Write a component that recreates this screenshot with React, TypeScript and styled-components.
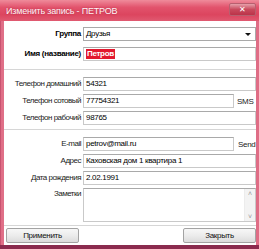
import styled, { createGlobalStyle } from 'styled-components'

const GlobalStyle = createGlobalStyle`
  html, body {
    margin: 0;
    padding: 0;
    background: #ffffff;
  }
  body {
    font-family: "Liberation Sans", Arial, sans-serif;
    font-size: 8px;
    color: #000;
  }
`

export default function App() {
  return (
    <>
      <GlobalStyle />
      <Window>
        <TitleBar>
          <Title>Изменить запись - ПЕТРОВ</Title>
          <CloseButton>✕</CloseButton>
        </TitleBar>
        <Frame>
          <Body>
            <Section $gap={6}>
              <Label $bold>Группа</Label>
              <Select>
                <span>Друзья</span>
                <Arrow />
              </Select>
              <Label $bold>Имя (название)</Label>
              <Field>
                <Selected>Петров</Selected>
              </Field>
            </Section>
            <Separator $top={8} $bottom={6} />
            <Section $gap={3}>
              <Label>Телефон домашний</Label>
              <Field>54321</Field>
              <Label>Телефон сотовый</Label>
              <Inline>
                <Field>77754321</Field>
                <Suffix>SMS</Suffix>
              </Inline>
              <Label>Телефон рабочий</Label>
              <Field>98765</Field>
            </Section>
            <Separator $top={4} $bottom={6} />
            <Section $gap={3}>
              <Label>E-mail</Label>
              <Inline>
                <Field>petrov@mail.ru</Field>
                <Suffix $pad={4}>Send</Suffix>
              </Inline>
              <Label>Адрес</Label>
              <Field>Каховская дом 1 квартира 1</Field>
              <Label>Дата рождения</Label>
              <Field>2.02.1991</Field>
              <Label $top>Заметки</Label>
              <Notes>
                <Scrollbar>
                  <ScrollArrow>˄</ScrollArrow>
                  <ScrollArrow>˅</ScrollArrow>
                </Scrollbar>
              </Notes>
            </Section>
            <Separator $top={3} $bottom={1} />
            <ButtonRow>
              <Button>Применить</Button>
              <Button>Закрыть</Button>
            </ButtonRow>
          </Body>
        </Frame>
      </Window>
    </>
  )
}

const Window = styled.div`
  width: 259px;
  height: 249px;
  display: flex;
  flex-direction: column;
  background: #d9607b;
  overflow: hidden;
`

const TitleBar = styled.div`
  height: 21px;
  flex: none;
  display: flex;
  align-items: flex-start;
  justify-content: space-between;
  padding: 0 3px 0 6px;
  box-sizing: border-box;
  background: linear-gradient(#ef8b9b, #e2536c 35%, #dc455f 70%, #e05a71);
`

const Title = styled.div`
  margin-top: 6px;
  font-size: 9px;
  letter-spacing: -0.2px;
  color: #fff4f6;
  text-shadow: 0 0 2px rgba(150, 20, 50, 0.6);
`

const CloseButton = styled.div`
  margin-top: 3px;
  width: 27px;
  height: 13px;
  box-sizing: border-box;
  border: 1px solid #b8606f;
  border-radius: 2px;
  background: linear-gradient(#e6a0aa, #c94a5d 50%, #bb3349);
  color: #fff;
  font-size: 8px;
  line-height: 11px;
  text-align: center;
`

const Frame = styled.div`
  flex: 1;
  display: flex;
  padding: 0 3px 4px 4px;
  background: linear-gradient(90deg, #b43a5a 0, #df6d86 1px, #e07088 3px, #df6d86 100%);
  position: relative;
  &::after {
    content: '';
    position: absolute;
    left: 0;
    right: 0;
    bottom: 0;
    height: 4px;
    background: #8b2b4e;
  }
`

const Body = styled.div`
  flex: 1;
  background: #fff;
  padding: 6px 0 2px 0;
  display: flex;
  flex-direction: column;
`

const Section = styled.div<{ $gap: number }>`
  display: grid;
  grid-template-columns: 77px 1fr;
  column-gap: 2px;
  row-gap: ${({ $gap }) => $gap}px;
`

const Label = styled.div<{ $bold?: boolean; $top?: boolean }>`
  height: 14px;
  line-height: 14px;
  text-align: right;
  white-space: nowrap;
  letter-spacing: ${({ $bold }) => ($bold ? '-0.3px' : '-0.5px')};
  font-weight: ${({ $bold }) => ($bold ? 'bold' : 'normal')};
  color: ${({ $bold }) => ($bold ? '#000' : '#222')};
  align-self: start;
  margin-top: ${({ $top }) => ($top ? '-1px' : '0')};
`

const Field = styled.div`
  flex: 1;
  height: 14px;
  box-sizing: border-box;
  border: 1px solid #c9c9c9;
  border-top-color: #a9a9a9;
  background: #fff;
  padding: 0 2px;
  line-height: 12px;
  white-space: nowrap;
  overflow: hidden;
  letter-spacing: -0.3px;
`

const Select = styled(Field)`
  display: flex;
  align-items: center;
  justify-content: space-between;
  padding-right: 4px;
  border-color: #a9a9a9;
`

const Arrow = styled.div`
  width: 0;
  height: 0;
  border-left: 3px solid transparent;
  border-right: 3px solid transparent;
  border-top: 3px solid #111;
`

const Selected = styled.span`
  display: inline-block;
  background: #e2192f;
  color: #fff;
  font-weight: bold;
  line-height: 10px;
  padding: 0 1px;
`

const Inline = styled.div`
  display: flex;
  align-items: center;
`

const Suffix = styled.div<{ $pad?: number }>`
  width: 22px;
  box-sizing: border-box;
  padding-left: ${({ $pad }) => $pad ?? 3}px;
  white-space: nowrap;
  letter-spacing: -0.3px;
  color: #222;
`

const Notes = styled.div`
  height: 34px;
  box-sizing: border-box;
  border: 1px solid #c9c9c9;
  border-top-color: #a9a9a9;
  display: flex;
  justify-content: flex-end;
`

const Scrollbar = styled.div`
  width: 10px;
  background: #f3f3f3;
  border-left: 1px solid #ececec;
  display: flex;
  flex-direction: column;
  justify-content: space-between;
  align-items: center;
`

const ScrollArrow = styled.span`
  font-size: 7px;
  line-height: 9px;
  color: #9a9a9a;
`

const Separator = styled.div<{ $top: number; $bottom: number }>`
  height: 1px;
  background: #d6d6d6;
  border-bottom: 1px solid #fff;
  margin: ${({ $top, $bottom }) => `${$top}px 0 ${$bottom}px`};
`

const ButtonRow = styled.div`
  display: flex;
  justify-content: space-between;
  padding-left: 2px;
`

const Button = styled.div`
  width: 73px;
  height: 15px;
  box-sizing: border-box;
  border: 1px solid #a3a3a3;
  border-radius: 2px;
  background: linear-gradient(#f7f7f7, #ececec 50%, #dcdcdc);
  text-align: center;
  line-height: 13px;
  letter-spacing: -0.3px;
  color: #111;
`
